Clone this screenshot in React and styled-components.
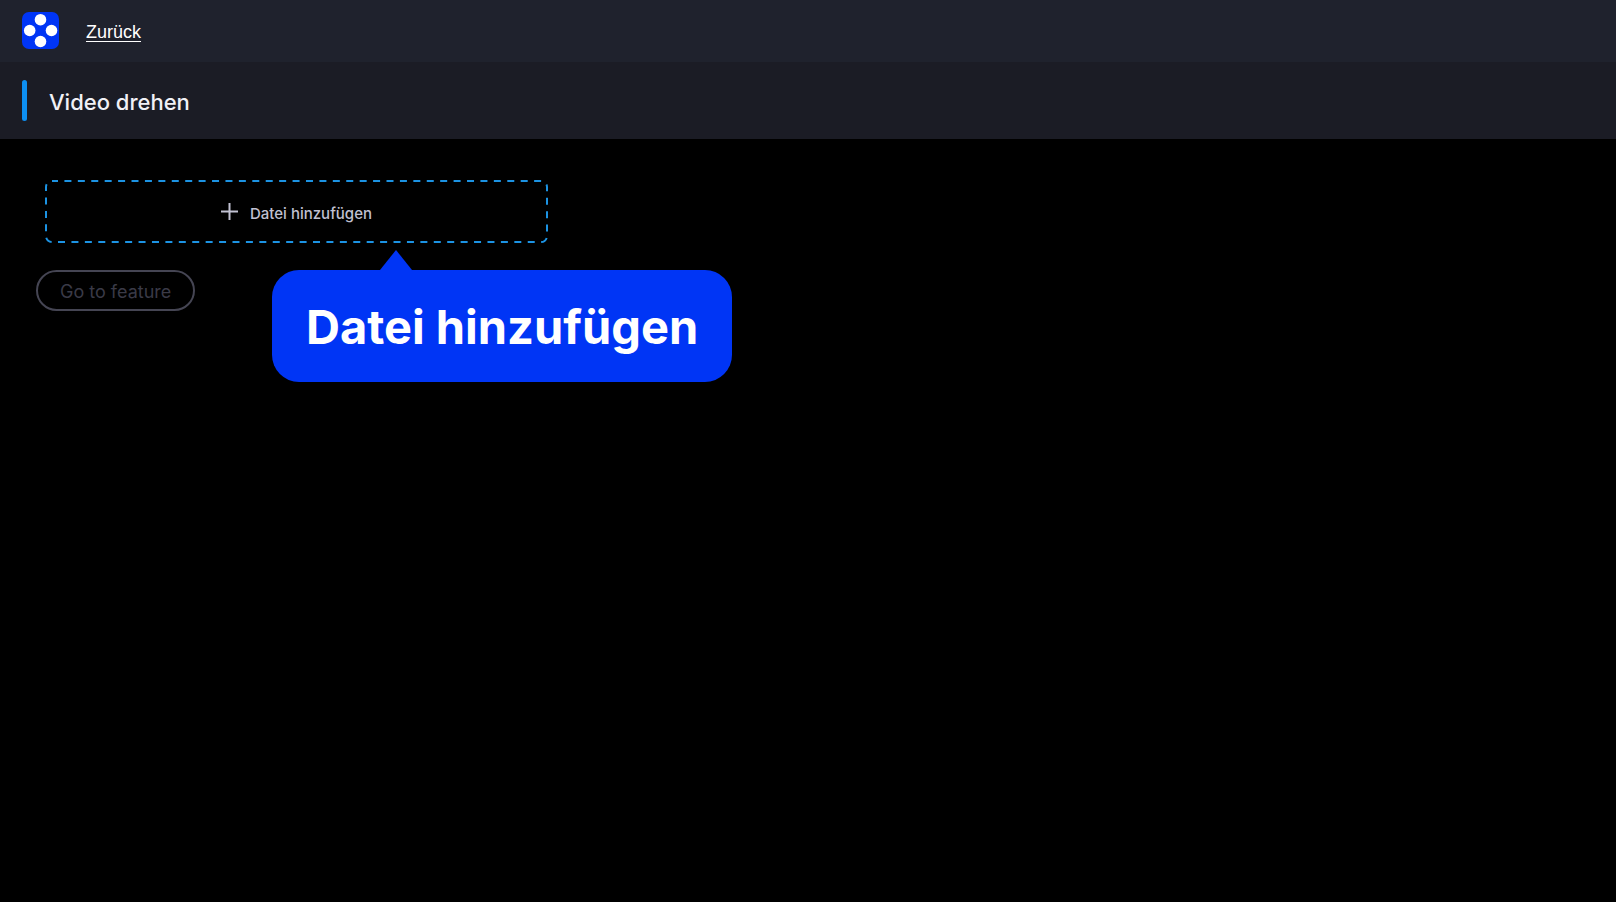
import React from "react";
import styled, { createGlobalStyle } from "styled-components";

const GlobalStyle = createGlobalStyle`
  *, *::before, *::after { box-sizing: border-box; }
  body {
    margin: 0;
    background: #000;
    color: #fff;
    font-family: Inter, "Open Sans", sans-serif;
  }
`;

const Page = styled.div`
  min-height: 100vh;
  background: #000;
`;

const TopBar = styled.header`
  display: flex;
  align-items: flex-start;
  gap: 27px;
  height: 62px;
  padding: 12px 22px;
  background: #1f222d;
`;

const Logo = styled.svg`
  display: block;
  width: 37px;
  height: 37px;
`;

const BackLink = styled.a`
  padding-top: 8px;
  color: #fff;
  font: 18px/24px "Liberation Sans", Arial, sans-serif;
  text-decoration: underline;
  text-underline-offset: 3px;
`;

const TitleBar = styled.div`
  display: flex;
  align-items: center;
  gap: 22px;
  height: 77px;
  padding: 0 22px;
  background: #1b1c25;
`;

const Accent = styled.span`
  width: 5px;
  height: 41px;
  border-radius: 3px;
  background: #0d8ff2;
`;

const Title = styled.h1`
  margin: 2px 0 0;
  color: #f1f1f6;
  font-size: 22px;
  line-height: 28px;
  font-weight: 500;
`;

const Content = styled.main`
  display: flex;
  flex-direction: column;
  align-items: flex-start;
  gap: 27px;
  padding: 41px 36px;
`;

const Upload = styled.div`
  position: relative;
  width: 100%;
  max-width: 512px;
  padding-left: 9px;
`;

const DropButton = styled.button`
  position: relative;
  display: flex;
  align-items: center;
  justify-content: center;
  gap: 12px;
  width: 100%;
  height: 63px;
  padding: 0;
  border: 0;
  border-radius: 7px;
  background: transparent;
  color: #c1c1d2;
  font-family: inherit;
  font-size: 15px;
  line-height: 20px;
  font-weight: 500;
  cursor: pointer;

  span { padding-top: 4px; }
`;

const DashedOutline = styled.svg`
  position: absolute;
  inset: 0;
  width: 100%;
  height: 100%;
  pointer-events: none;

  rect {
    width: calc(100% - 2px);
    height: calc(100% - 2px);
  }
`;

const PlusIcon = styled.svg`
  display: block;
  width: 17px;
  height: 17px;
`;

const Callout = styled.div`
  position: absolute;
  top: 90px;
  left: 236px;
  z-index: 1;
  padding: 29px 34px 27px;
  border-radius: 27px;
  background: #0035f5;
  color: #fff;
  font-size: 47px;
  line-height: 56px;
  font-weight: 700;
  white-space: nowrap;
`;

const Pointer = styled.svg`
  position: absolute;
  bottom: 100%;
  left: 108px;
  width: 32px;
  height: 20px;
`;

const FeatureButton = styled.button`
  height: 41px;
  padding: 2px 22px 0;
  border: 2px solid #454553;
  border-radius: 21px;
  background: transparent;
  color: #3a3a47;
  font-family: inherit;
  font-size: 18px;
  line-height: 24px;
`;

export default function App() {
  return (
    <Page>
      <GlobalStyle />
      <TopBar>
        <Logo viewBox="0 0 37 37" aria-hidden="true">
          <rect width="37" height="37" rx="7" fill="#0035f5" />
          <g fill="#fff">
            <circle cx="18.5" cy="7.7" r="5.8" />
            <circle cx="7.7" cy="18.5" r="5.8" />
            <circle cx="29.5" cy="18.5" r="5.8" />
            <circle cx="18.5" cy="29.5" r="5.8" />
          </g>
        </Logo>
        <BackLink href="#">Zurück</BackLink>
      </TopBar>
      <TitleBar>
        <Accent />
        <Title>Video drehen</Title>
      </TitleBar>
      <Content>
        <Upload>
          <DropButton type="button">
            <DashedOutline aria-hidden="true">
              <rect
                x="1"
                y="1"
                rx="6"
                fill="none"
                stroke="#1c93e3"
                strokeWidth="2"
                strokeDasharray="7 6.42"
                strokeDashoffset="1"
              />
            </DashedOutline>
            <PlusIcon viewBox="0 0 17 17" aria-hidden="true">
              <path d="M8.5 0v17M0 8.5h17" stroke="currentColor" strokeWidth="2" />
            </PlusIcon>
            <span>Datei hinzufügen</span>
          </DropButton>
          <Callout role="tooltip">
            <Pointer viewBox="0 0 32 20" aria-hidden="true">
              <path d="M16 0L32 20H0z" fill="#0035f5" />
            </Pointer>
            Datei hinzufügen
          </Callout>
        </Upload>
        <FeatureButton type="button" disabled>Go to feature</FeatureButton>
      </Content>
    </Page>
  );
}
